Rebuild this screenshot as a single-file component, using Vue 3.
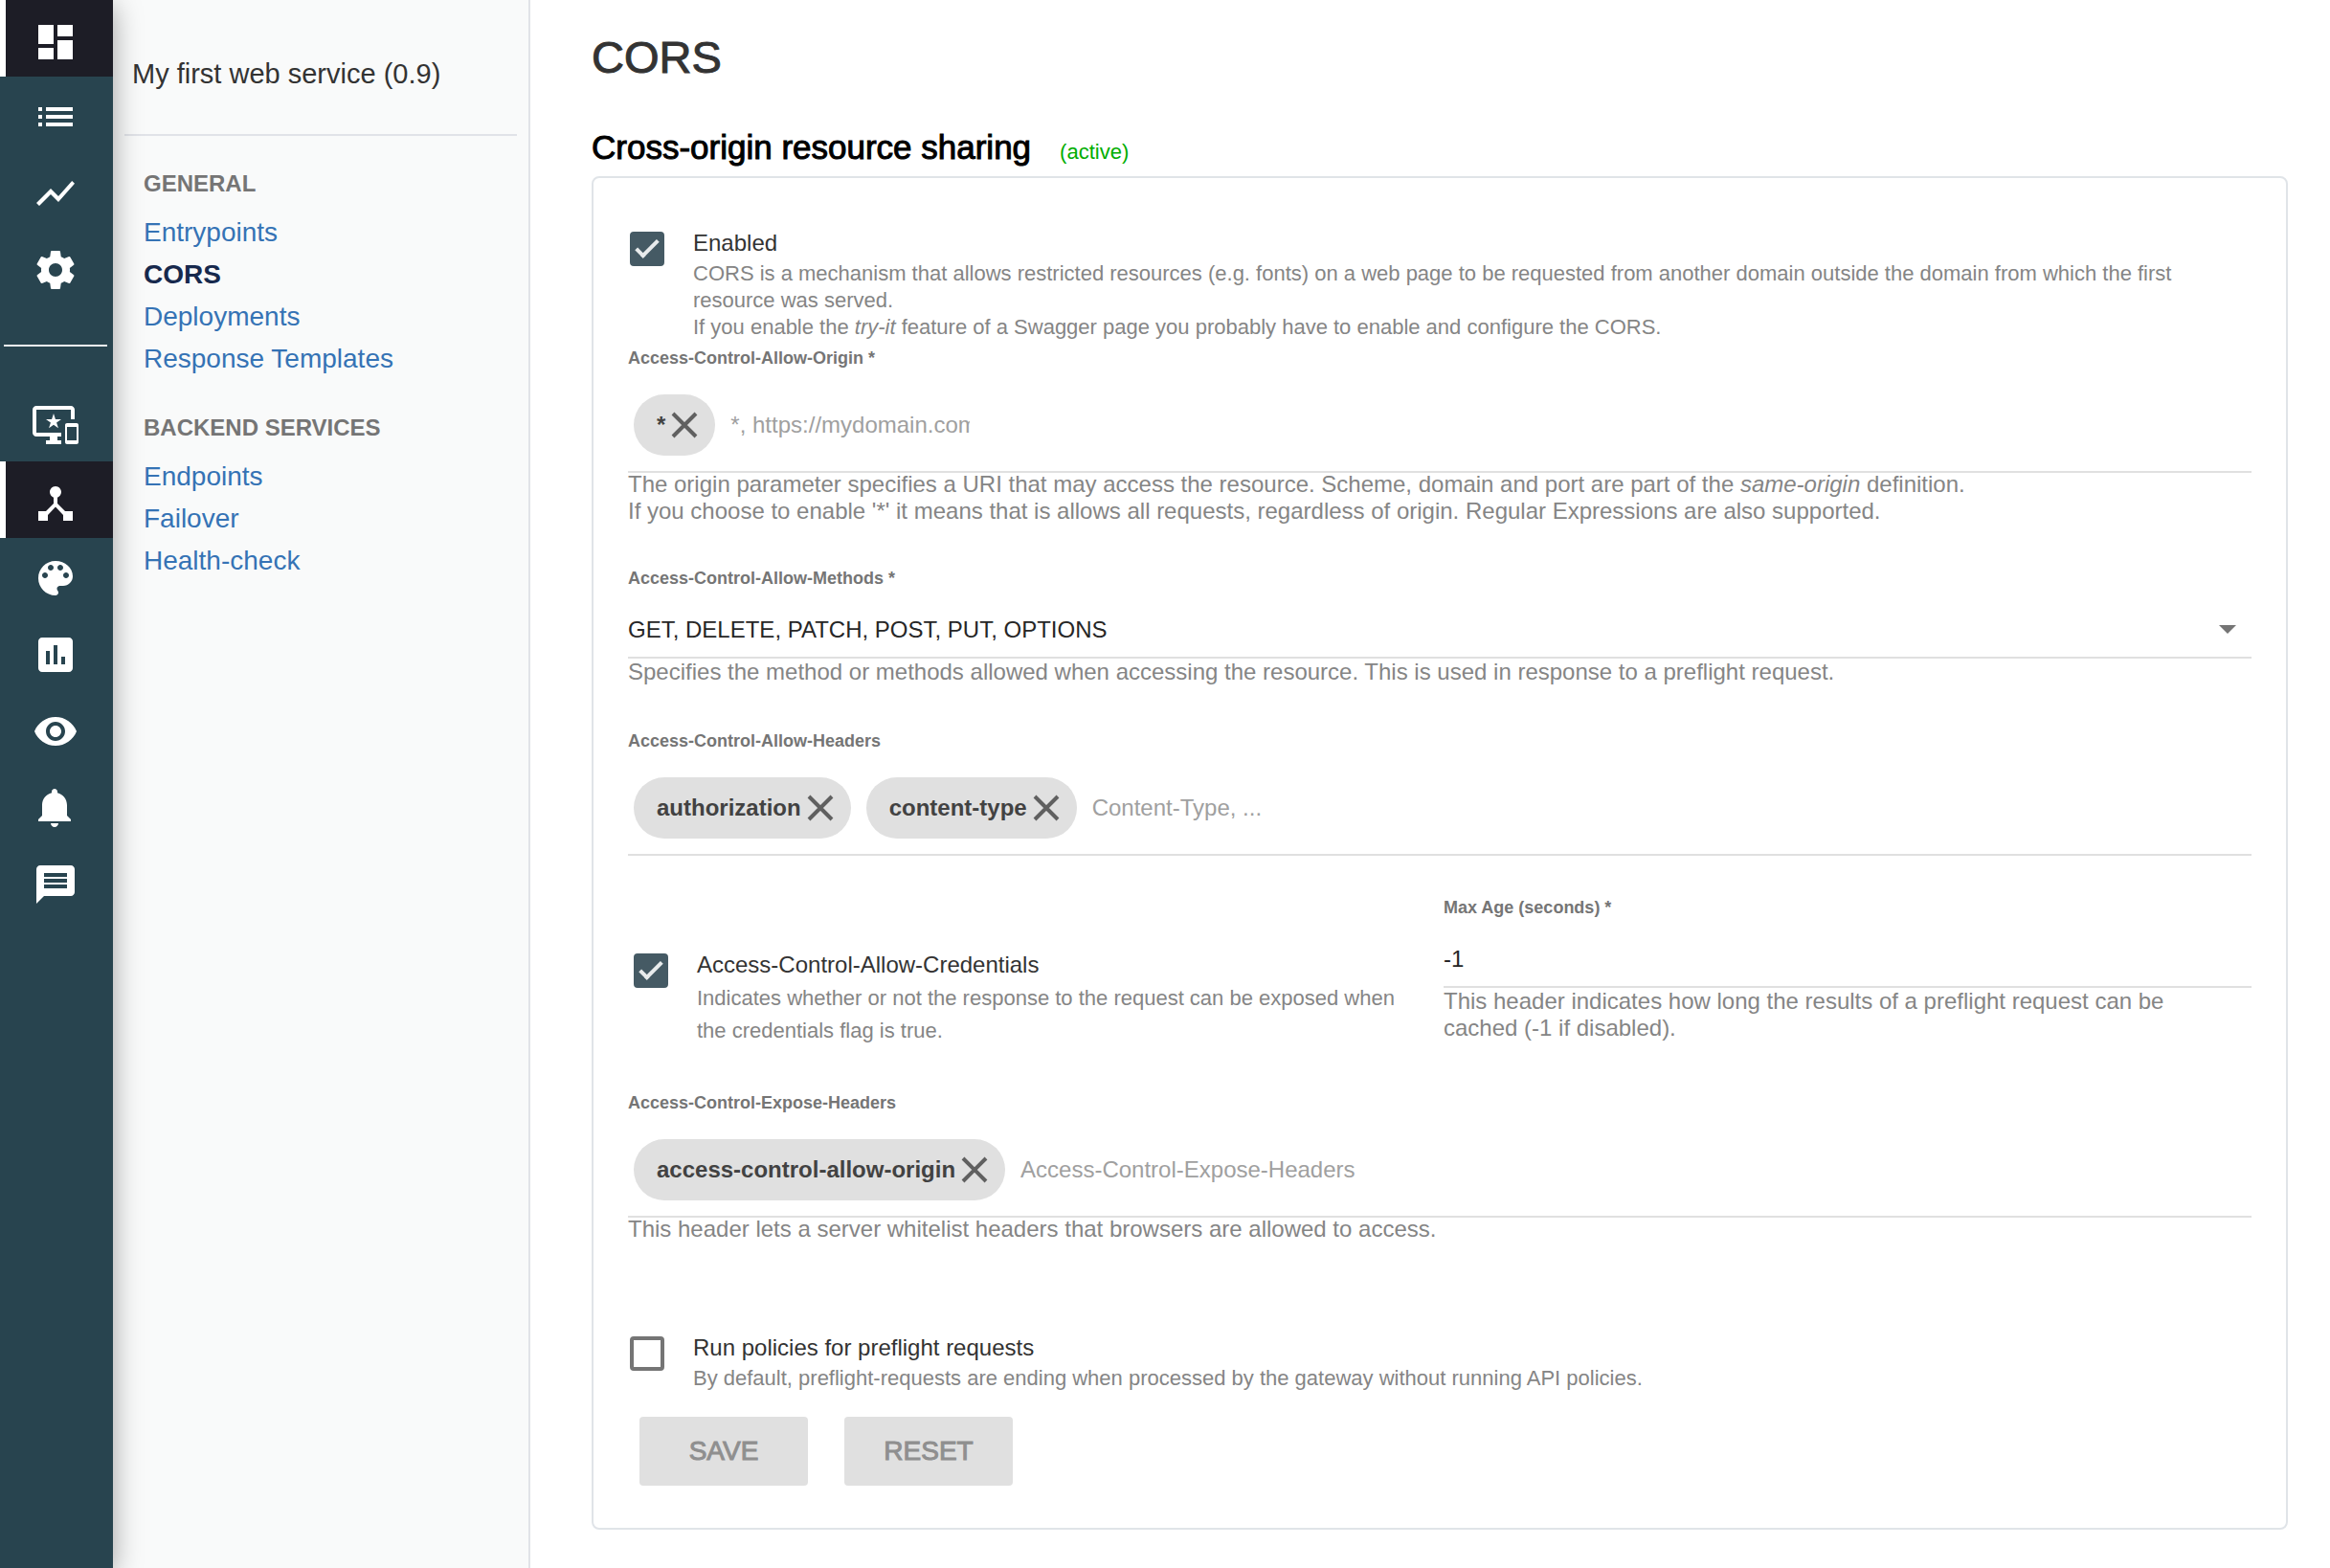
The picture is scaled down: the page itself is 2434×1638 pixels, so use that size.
<script setup>
import { ref } from 'vue'

const primaryNav = [
  { label: 'Dashboard', active: true, path: 'M3 13h8V3H3v10zm0 8h8v-6H3v6zm10 0h8V11h-8v10zm0-18v6h8V3h-8z' },
  { label: 'APIs', path: 'M3 13h2v-2H3v2zm0 4h2v-2H3v2zm0-8h2V7H3v2zm4 4h14v-2H7v2zm0 4h14v-2H7v2zM7 7v2h14V7H7z' },
  { label: 'Analytics', path: 'M3.5 18.49l6-6.01 4 4L22 6.92l-1.41-1.41-7.09 7.97-4-4L2 16.99z' },
  { label: 'Settings', path: 'M19.43 12.98c.04-.32.07-.64.07-.98s-.03-.66-.07-.98l2.11-1.65c.19-.15.24-.42.12-.64l-2-3.46c-.12-.22-.39-.3-.61-.22l-2.49 1c-.52-.4-1.08-.73-1.69-.98l-.38-2.65C14.46 2.18 14.25 2 14 2h-4c-.25 0-.46.18-.49.42l-.38 2.65c-.61.25-1.17.59-1.69.98l-2.49-1c-.23-.09-.49 0-.61.22l-2 3.46c-.13.22-.07.49.12.64l2.11 1.65c-.04.32-.07.65-.07.98s.03.66.07.98l-2.11 1.65c-.19.15-.24.42-.12.64l2 3.46c.12.22.39.3.61.22l2.49-1c.52.4 1.08.73 1.69.98l.38 2.65c.03.24.24.42.49.42h4c.25 0 .46-.18.49-.42l.38-2.65c.61-.25 1.17-.59 1.69-.98l2.49 1c.23.09.49 0 .61-.22l2-3.46c.12-.22.07-.49-.12-.64l-2.11-1.65zM12 15.5c-1.93 0-3.5-1.57-3.5-3.5s1.57-3.5 3.5-3.5 3.5 1.57 3.5 3.5-1.57 3.5-3.5 3.5z' }
]

const apiNav = [
  { label: 'Portal', path: 'M23 11.01L18 11c-.55 0-1 .45-1 1v9c0 .55.45 1 1 1h5c.55 0 1-.45 1-1v-9c0-.55-.45-.99-1-.99zM23 20h-5v-7h5v7zM20 2H2C.89 2 0 2.89 0 4v12c0 1.1.89 2 2 2h7v2H7v2h8v-2h-2v-2h2v-2H2V4h18v5h2V4c0-1.11-.9-2-2-2zm-8.03 7L11 6l-.97 3H7l2.47 1.76-.94 2.91 2.47-1.8 2.47 1.8-.94-2.91L15 9h-3.03z' },
  { label: 'Proxy', active: true, path: 'M17 16l-4-4V8.82C14.16 8.4 15 7.3 15 6c0-1.66-1.34-3-3-3S9 4.34 9 6c0 1.3.84 2.4 2 2.82V12l-4 4H3v5h5v-3.05l4-4.2 4 4.2V21h5v-5h-4z' },
  { label: 'Design', path: 'M12 3c-4.97 0-9 4.03-9 9s4.03 9 9 9c.83 0 1.5-.67 1.5-1.5 0-.39-.15-.74-.39-1.01-.23-.26-.38-.61-.38-.99 0-.83.67-1.5 1.5-1.5H16c2.76 0 5-2.24 5-5 0-4.42-4.03-8-9-8zm-5.5 9c-.83 0-1.5-.67-1.5-1.5S5.67 9 6.5 9 8 9.67 8 10.5 7.33 12 6.5 12zm3-4C8.67 8 8 7.33 8 6.5S8.67 5 9.5 5s1.5.67 1.5 1.5S10.33 8 9.5 8zm5 0c-.83 0-1.5-.67-1.5-1.5S13.67 5 14.5 5s1.5.67 1.5 1.5S15.33 8 14.5 8zm3 4c-.83 0-1.5-.67-1.5-1.5S16.67 9 17.5 9s1.5.67 1.5 1.5-.67 1.5-1.5 1.5z' },
  { label: 'Statistics', path: 'M19 3H5c-1.1 0-2 .9-2 2v14c0 1.1.9 2 2 2h14c1.1 0 2-.9 2-2V5c0-1.1-.9-2-2-2zM9 17H7v-7h2v7zm4 0h-2V7h2v10zm4 0h-2v-4h2v4z' },
  { label: 'Audit', path: 'M12 4.5C7 4.5 2.73 7.61 1 12c1.73 4.39 6 7.5 11 7.5s9.27-3.11 11-7.5c-1.73-4.39-6-7.5-11-7.5zM12 17c-2.76 0-5-2.24-5-5s2.24-5 5-5 5 2.24 5 5-2.24 5-5 5zm0-8c-1.66 0-3 1.34-3 3s1.34 3 3 3 3-1.34 3-3-1.34-3-3-3z' },
  { label: 'Notifications', path: 'M11.5 22c1.1 0 2-.9 2-2h-4c0 1.1.9 2 2 2zm6.5-6v-5.5c0-3.07-2.13-5.64-5-6.32V3.5c0-.83-.67-1.5-1.5-1.5S10 2.67 10 3.5v.68c-2.87.68-5 3.25-5 6.32V16l-2 2v1h17v-1l-2-2z' },
  { label: 'Messages', path: 'M20 2H4c-1.1 0-1.99.9-1.99 2L2 22l4-4h14c1.1 0 2-.9 2-2V4c0-1.1-.9-2-2-2zm-2 12H6v-2h12v2zm0-3H6V9h12v2zm0-3H6V6h12v2z' }
]

const sections = [
  { title: 'GENERAL', links: ['Entrypoints', 'CORS', 'Deployments', 'Response Templates'] },
  { title: 'BACKEND SERVICES', links: ['Endpoints', 'Failover', 'Health-check'] }
]
const currentLink = 'CORS'

const enabled = ref(true)
const credentials = ref(true)
const runPolicies = ref(false)
const maxAge = ref('-1')
const origins = ref(['*'])
const allowHeaders = ref(['authorization', 'content-type'])
const exposeHeaders = ref(['access-control-allow-origin'])
</script>

<template>
  <div class="page">
    <nav class="rail" aria-label="Main">
      <a
        v-for="item in primaryNav"
        :key="item.label"
        href="#"
        class="rail-item"
        :class="{ active: item.active }"
        :aria-label="item.label"
      >
        <svg viewBox="0 0 24 24" aria-hidden="true"><path :d="item.path" /></svg>
      </a>
      <hr class="rail-divider" />
      <a
        v-for="item in apiNav"
        :key="item.label"
        href="#"
        class="rail-item"
        :class="{ active: item.active }"
        :aria-label="item.label"
      >
        <svg viewBox="0 0 24 24" aria-hidden="true"><path :d="item.path" /></svg>
      </a>
    </nav>

    <aside class="panel">
      <p class="api-name">My first web service (0.9)</p>
      <section v-for="section in sections" :key="section.title" class="panel-section">
        <h3>{{ section.title }}</h3>
        <ul>
          <li v-for="link in section.links" :key="link">
            <a href="#" :class="{ current: link === currentLink }">{{ link }}</a>
          </li>
        </ul>
      </section>
    </aside>

    <main class="content">
      <h1>CORS</h1>
      <h2>Cross-origin resource sharing <small>(active)</small></h2>

      <form class="card" @submit.prevent>
        <div class="check-row">
          <input id="enabled" v-model="enabled" type="checkbox" />
          <div class="check-text">
            <label for="enabled">Enabled</label>
            <p>
              CORS is a mechanism that allows restricted resources (e.g. fonts) on a web page to be
              requested from another domain outside the domain from which the first resource was served.<br />
              If you enable the <em>try-it</em> feature of a Swagger page you probably have to enable and
              configure the CORS.
            </p>
          </div>
        </div>

        <div class="field origin-field">
          <label for="origin">Access-Control-Allow-Origin *</label>
          <div class="chips">
            <span v-for="(value, i) in origins" :key="value" class="chip">
              {{ value }}
              <button type="button" :aria-label="'Remove ' + value" @click="origins.splice(i, 1)">
                <svg viewBox="0 0 28 28" aria-hidden="true"><path d="M2 2L26 26M26 2L2 26" /></svg>
              </button>
            </span>
            <input id="origin" class="short" type="text" placeholder="*, https://mydomain.com" />
          </div>
          <p class="hint">
            The origin parameter specifies a URI that may access the resource. Scheme, domain and port are
            part of the <em>same-origin</em> definition.<br />
            If you choose to enable '*' it means that is allows all requests, regardless of origin. Regular
            Expressions are also supported.
          </p>
        </div>

        <div class="field">
          <label for="methods">Access-Control-Allow-Methods *</label>
          <div class="select">
            <select id="methods" class="line-input">
              <option>GET, DELETE, PATCH, POST, PUT, OPTIONS</option>
            </select>
            <svg viewBox="0 0 18 9" aria-hidden="true"><path d="M0 0H18L9 9Z" /></svg>
          </div>
          <p class="hint">
            Specifies the method or methods allowed when accessing the resource. This is used in response to
            a preflight request.
          </p>
        </div>

        <div class="field">
          <label for="headers">Access-Control-Allow-Headers</label>
          <div class="chips">
            <span v-for="(value, i) in allowHeaders" :key="value" class="chip">
              {{ value }}
              <button type="button" :aria-label="'Remove ' + value" @click="allowHeaders.splice(i, 1)">
                <svg viewBox="0 0 28 28" aria-hidden="true"><path d="M2 2L26 26M26 2L2 26" /></svg>
              </button>
            </span>
            <input id="headers" type="text" placeholder="Content-Type, ..." />
          </div>
        </div>

        <div class="columns">
          <div class="check-row credentials">
            <input id="credentials" v-model="credentials" type="checkbox" />
            <div class="check-text">
              <label for="credentials">Access-Control-Allow-Credentials</label>
              <p>
                Indicates whether or not the response to the request can be exposed when the credentials
                flag is true.
              </p>
            </div>
          </div>
          <div class="field">
            <label for="max-age">Max Age (seconds) *</label>
            <input id="max-age" v-model="maxAge" class="line-input" type="text" />
            <p class="hint">
              This header indicates how long the results of a preflight request can be cached (-1 if
              disabled).
            </p>
          </div>
        </div>

        <div class="field">
          <label for="expose">Access-Control-Expose-Headers</label>
          <div class="chips">
            <span v-for="(value, i) in exposeHeaders" :key="value" class="chip">
              {{ value }}
              <button type="button" :aria-label="'Remove ' + value" @click="exposeHeaders.splice(i, 1)">
                <svg viewBox="0 0 28 28" aria-hidden="true"><path d="M2 2L26 26M26 2L2 26" /></svg>
              </button>
            </span>
            <input id="expose" type="text" placeholder="Access-Control-Expose-Headers" />
          </div>
          <p class="hint">This header lets a server whitelist headers that browsers are allowed to access.</p>
        </div>

        <div class="check-row policies">
          <input id="policies" v-model="runPolicies" type="checkbox" />
          <div class="check-text">
            <label for="policies">Run policies for preflight requests</label>
            <p>By default, preflight-requests are ending when processed by the gateway without running API policies.</p>
          </div>
        </div>

        <div class="actions">
          <button type="submit" disabled>SAVE</button>
          <button type="reset" disabled>RESET</button>
        </div>
      </form>
    </main>
  </div>
</template>

<style>
body {
  background: #fff;
}
</style>

<style scoped>
.page {
  display: flex;
  min-height: 100vh;
  font-family: "Liberation Sans", Arial, sans-serif;
  font-size: 24px;
  line-height: 28px;
  color: #333;
}

.page *,
.page *::after {
  box-sizing: border-box;
}

p,
h1,
h2,
h3,
ul {
  margin: 0;
  padding: 0;
}

/* Icon rail */
.rail {
  position: relative;
  z-index: 1;
  flex: 0 0 118px;
  background: #28444f;
  box-shadow: 0 6px 28px rgba(0, 0, 0, 0.36);
}

.rail-item {
  display: flex;
  align-items: center;
  height: 80px;
  padding: 4px 0 0 34px;
}

.rail-item.active {
  padding: 8px 0 0 28px;
  border-left: 6px solid #fff;
  background: #1d1d26;
}

.rail-item svg {
  width: 48px;
  height: 48px;
  fill: #fff;
}

.rail-divider {
  height: 2px;
  margin: 40px 6px 40px 4px;
  border: 0;
  background: #f2f3f4;
}

/* Section menu */
.panel {
  flex: 0 0 436px;
  padding: 55px 12px 0;
  border-right: 2px solid #e1e3e8;
  background: #f9fafa;
}

.api-name {
  padding: 0 8px 41px;
  border-bottom: 2px solid #e1e3e8;
  font-size: 29px;
  line-height: 44px;
}

.panel-section {
  margin-top: 34px;
  padding-left: 20px;
}

.panel-section h3 {
  margin-bottom: 13px;
  font-size: 24px;
  line-height: 32px;
  color: #757575;
}

.panel-section ul {
  list-style: none;
}

.panel-section a {
  display: block;
  font-size: 28px;
  line-height: 44px;
  color: #3573b5;
  text-decoration: none;
}

.panel-section a.current {
  font-weight: bold;
  color: #17294d;
}

/* Main column */
.content {
  flex: 1;
  min-width: 0;
  padding: 32px 44px 40px 64px;
}

h1 {
  margin-bottom: 46px;
  font-size: 47px;
  font-weight: normal;
  line-height: 56px;
  -webkit-text-stroke: 1px;
}

h2 {
  display: flex;
  align-items: baseline;
  gap: 30px;
  height: 42px;
  margin-bottom: 8px;
  font-size: 35px;
  font-weight: normal;
  line-height: 40px;
  color: #000;
  -webkit-text-stroke: 1px;
}

h2 small {
  font-size: 22px;
  line-height: 28px;
  color: #00ad00;
  -webkit-text-stroke: 0;
}

.card {
  padding: 54px 36px 44px;
  border: 2px solid #e0e4e8;
  border-radius: 8px;
}

/* Check boxes */
.check-row {
  display: flex;
  align-items: flex-start;
  gap: 30px;
  padding-left: 2px;
}

.check-row input {
  position: relative;
  flex: none;
  width: 36px;
  height: 36px;
  margin: 2px 0 0;
  border: 4px solid #757575;
  border-radius: 4px;
  appearance: none;
}

.check-row input:checked {
  border-color: #455a64;
  background: #455a64;
}

.check-row input:checked::after {
  content: "";
  position: absolute;
  top: -1px;
  left: 8px;
  width: 12px;
  height: 24px;
  border: solid #e8ebec;
  border-width: 0 4px 4px 0;
  transform: rotate(45deg);
}

.check-text label {
  display: block;
}

.check-text p {
  margin-top: 4px;
  font-size: 22px;
  color: #858585;
}

/* Fields */
.field {
  margin-top: 46px;
}

.field.origin-field {
  margin-top: 6px;
}

.origin-field + .field {
  margin-top: 44px;
}

.field > label {
  display: block;
  font-size: 18px;
  font-weight: bold;
  line-height: 24px;
  color: #757575;
}

.hint {
  color: #858585;
}

.chips {
  display: flex;
  align-items: center;
  gap: 16px;
  margin-top: 10px;
  padding: 16px 6px;
  box-shadow: 0 2px 0 #e0e0e0;
}

.chip {
  display: flex;
  align-items: center;
  gap: 6px;
  height: 64px;
  padding: 0 18px 0 24px;
  border-radius: 32px;
  background: #e0e0e0;
  font-weight: bold;
  color: #424242;
}

.chip button {
  width: 28px;
  height: 28px;
  padding: 0;
  border: 0;
  background: none;
}

.chip svg {
  display: block;
  stroke: #606060;
  stroke-width: 4;
}

.chips input {
  flex: 1;
  min-width: 0;
  padding: 0;
  border: 0;
  background: none;
  font: inherit;
}

.chips input.short {
  flex: 0 1 250px;
}

.chips input::placeholder {
  color: #a0a0a0;
}

.line-input {
  display: block;
  width: 100%;
  height: 58px;
  margin-top: 14px;
  padding: 0;
  border: 0;
  border-bottom: 2px solid #e0e0e0;
  border-radius: 0;
  background: none;
  font: inherit;
  color: #262626;
  appearance: none;
}

.select {
  position: relative;
}

.select svg {
  position: absolute;
  top: 23px;
  right: 16px;
  width: 18px;
  fill: #757575;
  pointer-events: none;
}

.columns {
  display: grid;
  grid-template-columns: 1fr 1fr;
  gap: 8px;
  margin-top: 44px;
}

.columns .field {
  margin-top: 0;
}

.columns .hint {
  padding-right: 40px;
}

.check-row.credentials {
  padding: 58px 20px 0 6px;
}

.credentials .check-text p {
  line-height: 34px;
}

.check-row.policies {
  margin-top: 96px;
}

/* Buttons */
.actions {
  display: flex;
  gap: 38px;
  margin-top: 26px;
  padding-left: 12px;
}

.actions button {
  width: 176px;
  height: 72px;
  padding: 0;
  border: 0;
  border-radius: 4px;
  background: #e0e0e0;
  font: inherit;
  font-size: 28px;
  color: #8f8f8f;
  -webkit-text-stroke: 1px;
}
</style>
